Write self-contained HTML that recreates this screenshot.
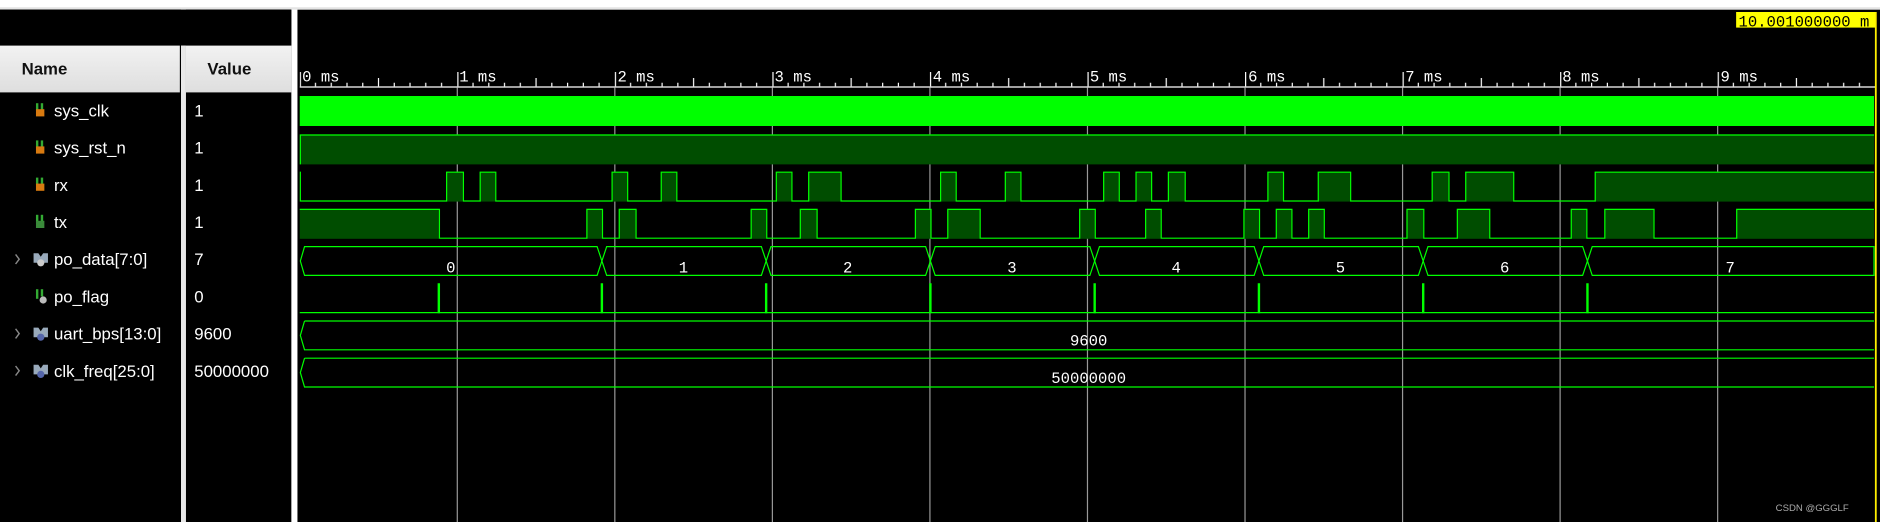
<!DOCTYPE html>
<html><head><meta charset="utf-8"><style>
html,body{margin:0;padding:0;background:#fff;overflow:hidden;width:1880px;height:522px}
#w{position:absolute;left:0;top:0;width:1568px;height:435px;transform:scale(1.19898,1.2);transform-origin:0 0;background:#fff}
.lp{position:absolute;background:#000}
.hd{position:absolute;top:38px;height:39px;background:linear-gradient(#f2f2f2,#dedede);font:bold 14px "Liberation Sans",sans-serif;color:#111;line-height:39px}
.nm{position:absolute;font:14px "Liberation Sans",sans-serif;color:#fff;line-height:16px}
</style></head><body><div id="w">
<div style="position:absolute;left:0;top:0;width:1568px;height:6px;background:#fff"></div>
<div style="position:absolute;left:0;top:6px;width:1568px;height:2px;background:#e4e4e4"></div>
<div class="lp" style="left:0;top:8px;width:151px;height:427px"></div>
<div class="lp" style="left:155px;top:8px;width:88px;height:427px"></div>
<div class="lp" style="left:0;top:8px;width:243px;height:30px"></div>
<div style="position:absolute;left:151px;top:38px;width:4px;height:397px;background:#e8e8e8"></div>
<div class="hd" style="left:0;width:150px;padding-left:18px;box-sizing:border-box">Name</div>
<div class="hd" style="left:155px;width:88px;padding-left:18px;box-sizing:border-box">Value</div>

<svg style="position:absolute;left:0;top:0" width="243" height="435">
<g transform="translate(30,86)"><rect x="0" y="0" width="2" height="6" fill="#3a3"/><rect x="4" y="0" width="2" height="6" fill="#3a3"/><rect x="0" y="5" width="7" height="6" fill="#d87a10"/></g>
<g transform="translate(30,117)"><rect x="0" y="0" width="2" height="6" fill="#3a3"/><rect x="4" y="0" width="2" height="6" fill="#3a3"/><rect x="0" y="5" width="7" height="6" fill="#d87a10"/></g>
<g transform="translate(30,148)"><rect x="0" y="0" width="2" height="6" fill="#3a3"/><rect x="4" y="0" width="2" height="6" fill="#3a3"/><rect x="0" y="5" width="7" height="6" fill="#d87a10"/></g>
<g transform="translate(30,179)"><rect x="0" y="0" width="2" height="6" fill="#3a3"/><rect x="4" y="0" width="2" height="6" fill="#3a3"/><rect x="0" y="5" width="7" height="6" fill="#3a8a3a"/></g>
<g transform="translate(30,241)"><rect x="0" y="0" width="2" height="8" fill="#3a3"/><rect x="4" y="0" width="2" height="6" fill="#3a3"/><circle cx="6" cy="9" r="3" fill="#bbb"/></g>
<g transform="translate(28,211)"><path d="M0 0h4l2 3 2-3h4v8h-12z" fill="#9ab"/><circle cx="6" cy="8" r="3" fill="#ccc"/></g>
<g transform="translate(28,273)"><path d="M0 0h4l2 3 2-3h4v8h-12z" fill="#9ab"/><circle cx="6" cy="8" r="3" fill="#56a"/></g>
<g transform="translate(28,304)"><path d="M0 0h4l2 3 2-3h4v8h-12z" fill="#9ab"/><circle cx="6" cy="8" r="3" fill="#56a"/></g>
<g stroke="#888" fill="none" stroke-width="1.2"><path d="M13 212l3 4-3 4"/><path d="M13 274l3 4-3 4"/><path d="M13 305l3 4-3 4"/></g>
</svg>
<div class="nm" style="left:45px;top:84px">sys_clk</div>
<div class="nm" style="left:45px;top:115px">sys_rst_n</div>
<div class="nm" style="left:45px;top:146px">rx</div>
<div class="nm" style="left:45px;top:177px">tx</div>
<div class="nm" style="left:45px;top:208px">po_data[7:0]</div>
<div class="nm" style="left:45px;top:239px">po_flag</div>
<div class="nm" style="left:45px;top:270px">uart_bps[13:0]</div>
<div class="nm" style="left:45px;top:301px">clk_freq[25:0]</div>
<div class="nm" style="left:162px;top:84px">1</div>
<div class="nm" style="left:162px;top:115px">1</div>
<div class="nm" style="left:162px;top:146px">1</div>
<div class="nm" style="left:162px;top:177px">1</div>
<div class="nm" style="left:162px;top:208px">7</div>
<div class="nm" style="left:162px;top:239px">0</div>
<div class="nm" style="left:162px;top:270px">9600</div>
<div class="nm" style="left:162px;top:301px">50000000</div>

<svg style="position:absolute;left:248px;top:8px" width="1320" height="427" viewBox="248 8 1320 427">
<defs>
<pattern id="tk" patternUnits="userSpaceOnUse" x="250" y="0" width="131.4" height="435">
<g stroke="#fff" stroke-width="1">
<path d="M13.14 69v3M26.28 69v3M39.42 69v3M52.56 69v3M78.84 69v3M91.98 69v3M105.12 69v3M118.26 69v3M65.7 65v7M0.5 60v12"/>
</g></pattern>
</defs>
<rect x="248" y="8" width="1320" height="427" fill="#000"/>
<rect x="250" y="58" width="1315" height="15" fill="url(#tk)"/>
<path d="M250 72.5H1565" stroke="#fff"/>
<g font-family="Liberation Mono,monospace" font-size="13" fill="#fff">
<text x="252" y="68">0 ms</text><text x="383" y="68">1 ms</text><text x="515" y="68">2 ms</text><text x="646" y="68">3 ms</text><text x="778" y="68">4 ms</text><text x="909" y="68">5 ms</text><text x="1041" y="68">6 ms</text><text x="1172" y="68">7 ms</text><text x="1303" y="68">8 ms</text><text x="1435" y="68">9 ms</text>
</g>
<g stroke="#999" stroke-width="1">
<path d="M381.4 73V435M512.8 73V435M644.2 73V435M775.6 73V435M907 73V435M1038.4 73V435M1169.8 73V435M1301.2 73V435M1432.6 73V435"/>
</g>
<rect x="250" y="80" width="1313" height="25" fill="#00ff00"/>
<rect x="250" y="112" width="1313" height="25" fill="#004d00"/>
<path d="M250.5 137V112.5H1563" stroke="#00ff00" fill="none"/>
<g fill="#004d00">
<rect x="372" y="143" width="14" height="25"/><rect x="400" y="143" width="13" height="25"/><rect x="510" y="143" width="13" height="25"/><rect x="551" y="143" width="13" height="25"/><rect x="647" y="143" width="13" height="25"/><rect x="674" y="143" width="27" height="25"/><rect x="784" y="143" width="13" height="25"/><rect x="838" y="143" width="13" height="25"/><rect x="920" y="143" width="13" height="25"/><rect x="947" y="143" width="13" height="25"/><rect x="974" y="143" width="14" height="25"/><rect x="1057" y="143" width="13" height="25"/><rect x="1099" y="143" width="27" height="25"/><rect x="1194" y="143" width="14" height="25"/><rect x="1222" y="143" width="40" height="25"/><rect x="1330" y="143" width="233" height="25"/>
</g>
<path d="M250.5 143V167.5H372.5V143.5H386.5V167.5H400.5V143.5H413.5V167.5H510.5V143.5H523.5V167.5H551.5V143.5H564.5V167.5H647.5V143.5H660.5V167.5H674.5V143.5H701.5V167.5H784.5V143.5H797.5V167.5H838.5V143.5H851.5V167.5H920.5V143.5H933.5V167.5H947.5V143.5H960.5V167.5H974.5V143.5H988.5V167.5H1057.5V143.5H1070.5V167.5H1099.5V143.5H1126.5V167.5H1194.5V143.5H1208.5V167.5H1222.5V143.5H1262.5V167.5H1330.5V143.5H1563" stroke="#00ff00" fill="none"/>
<g fill="#004d00">
<rect x="250" y="174" width="116" height="25"/><rect x="489" y="174" width="13" height="25"/><rect x="516" y="174" width="14" height="25"/><rect x="626" y="174" width="13" height="25"/><rect x="667" y="174" width="14" height="25"/><rect x="763" y="174" width="13" height="25"/><rect x="790" y="174" width="27" height="25"/><rect x="900" y="174" width="13" height="25"/><rect x="955" y="174" width="13" height="25"/><rect x="1037" y="174" width="13" height="25"/><rect x="1064" y="174" width="13" height="25"/><rect x="1091" y="174" width="13" height="25"/><rect x="1173" y="174" width="14" height="25"/><rect x="1215" y="174" width="27" height="25"/><rect x="1310" y="174" width="13" height="25"/><rect x="1338" y="174" width="41" height="25"/><rect x="1448" y="174" width="115" height="25"/>
</g>
<path d="M250 174.5H366.5V198.5H489.5V174.5H502.5V198.5H516.5V174.5H530.5V198.5H626.5V174.5H639.5V198.5H667.5V174.5H681.5V198.5H763.5V174.5H776.5V198.5H790.5V174.5H817.5V198.5H900.5V174.5H913.5V198.5H955.5V174.5H968.5V198.5H1037.5V174.5H1050.5V198.5H1064.5V174.5H1077.5V198.5H1091.5V174.5H1104.5V198.5H1173.5V174.5H1187.5V198.5H1215.5V174.5H1242.5V198.5H1310.5V174.5H1323.5V198.5H1338.5V174.5H1379.5V198.5H1448.5V174.5H1563" stroke="#00ff00" fill="none"/>
<g stroke="#00ff00" fill="none">
<path d="M254 205.5L250.5 217.5L254 229.5H498L502 217.5L498 205.5Z"/>
<path d="M506 205.5L502 217.5L506 229.5H635L639 217.5L635 205.5Z"/>
<path d="M643 205.5L639 217.5L643 229.5H772L776 217.5L772 205.5Z"/>
<path d="M780 205.5L776 217.5L780 229.5H909L913 217.5L909 205.5Z"/>
<path d="M917 205.5L913 217.5L917 229.5H1046L1050 217.5L1046 205.5Z"/>
<path d="M1054 205.5L1050 217.5L1054 229.5H1183L1187 217.5L1183 205.5Z"/>
<path d="M1191 205.5L1187 217.5L1191 229.5H1320L1324 217.5L1320 205.5Z"/>
<path d="M1328 205.5L1324 217.5L1328 229.5H1563V205.5Z"/>
<path d="M250 260.5H1563"/>
<path d="M254 267.5L250.5 279.5L254 291.5H1563M254 267.5H1563"/>
<path d="M254 298.5L250.5 310.5L254 322.5H1563M254 298.5H1563"/>
</g>
<g stroke="#00ff00" stroke-width="2"><path d="M366 236V261M502 236V261M639 236V261M776 236V261M913 236V261M1050 236V261M1187 236V261M1324 236V261"/></g>
<g font-family="Liberation Mono,monospace" font-size="13" fill="#fff" text-anchor="middle">
<text x="376" y="227">0</text><text x="570" y="227">1</text><text x="707" y="227">2</text><text x="844" y="227">3</text><text x="981" y="227">4</text><text x="1118" y="227">5</text><text x="1255" y="227">6</text><text x="1443" y="227">7</text>
<text x="908" y="288">9600</text><text x="908" y="319">50000000</text>
</g>
<rect x="1448" y="10" width="117" height="13" fill="#ffff00"/>
<text x="1450" y="22" font-family="Liberation Mono,monospace" font-size="13" fill="#000">10.001000000 m</text>
<path d="M1564.5 10V435" stroke="#ffee00" stroke-width="1.5"/>
<text x="1481" y="426" font-family="Liberation Sans,sans-serif" font-size="8" fill="#aaa">CSDN @GGGLF</text>
</svg>
</div></body></html>
